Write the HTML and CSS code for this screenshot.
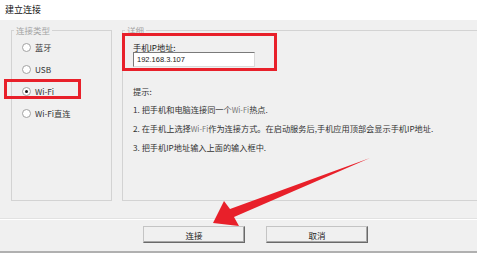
FILE: index.html
```html
<!DOCTYPE html>
<html lang="zh-CN">
<head>
  <meta charset="UTF-8" />
  <title>建立连接</title>
  <link rel="stylesheet" href="styles.css">
</head>
<body>
  <div class="window">
    <div class="titlebar">建立连接</div>

    <div class="client">
      <div class="groups">
        <fieldset class="group group-type">
          <legend>连接类型</legend>
          <div class="group-body">
            <label class="radio"><span class="radio-dot"></span>蓝牙</label>
            <label class="radio"><span class="radio-dot"></span>USB</label>
            <label class="radio"><span class="radio-dot checked"></span>Wi-Fi</label>
            <label class="radio"><span class="radio-dot"></span>Wi-Fi直连</label>
          </div>
        </fieldset>

        <fieldset class="group group-detail">
          <legend>详细</legend>
          <div class="group-body detail-body">
            <div class="field-label">手机IP地址:</div>
            <div class="ip-input">192.168.3.107</div>
            <div class="hint-title">提示:</div>
            <div class="hint">1. 把手机和电脑连接同一个<span class="latin">Wi-Fi</span>热点.</div>
            <div class="hint">2. 在手机上选择<span class="latin">Wi-Fi</span>作为连接方式。在启动服务后,手机应用顶部会显示手机IP地址.</div>
            <div class="hint">3. 把手机IP地址输入上面的输入框中.</div>
          </div>
        </fieldset>
      </div>

      <div class="actions">
        <button class="btn">连接</button>
        <button class="btn">取消</button>
      </div>
    </div>

    <!-- annotations drawn over the dialog -->
    <div class="mark mark-wifi"></div>
    <div class="mark mark-ip"></div>
    <svg class="arrow" width="480" height="256" viewBox="0 0 480 256">
      <polygon points="370,158 230,209 224,201 213,223 239,226 234,217" fill="#e8202a" />
    </svg>
  </div>
</body>
</html>
```

FILE: styles.css
```css
body {
  margin: 0;
  background-color: #fff;
  font-family: "Noto Sans CJK SC", "Noto Sans", sans-serif;
  color: #2b2b2b;
}
.window {
  position: relative;
  width: 477px;
  height: 256px;
}
.titlebar {
  height: 20px;
  line-height: 19px;
  padding-left: 5px;
  font-size: 9px;
  color: #111;
  background-color: #fff;
}
.client {
  height: 231px;
  background-color: #f0f0f0;
  border-bottom: 2px solid #b0b0b0;
  overflow: hidden;
}
.groups {
  display: flex;
  gap: 10px;
  padding: 4px 0 0 11px;
}
.group {
  margin: 0;
  padding: 0;
  border: 1px solid #d3d3d3;
  height: 177px;
  box-sizing: border-box;
  min-width: 0;
  flex: none;
}
.group legend {
  font-size: 8.5px;
  line-height: 12px;
  padding: 0 2px;
  margin-left: 2px;
  color: #a4a4a4;
}
.group-type {
  width: 101px;
}
.group-detail {
  width: 370px;
}
.group-body {
  padding-left: 9px;
}
.radio {
  display: flex;
  align-items: center;
  height: 22px;
  font-size: 8.2px;
  color: #333;
}
.radio-dot {
  width: 7px;
  height: 7px;
  margin: 0 4px 0 1px;
  border: 1px solid #a2a2a2;
  border-radius: 50%;
  background-color: #fff;
  display: flex;
  align-items: center;
  justify-content: center;
}
.radio-dot.checked::after {
  content: "";
  width: 3px;
  height: 3px;
  border-radius: 50%;
  background-color: #1a1a1a;
}
.detail-body {
  padding-left: 10px;
}
.field-label {
  margin-top: 6px;
  line-height: 10px;
  font-size: 8.2px;
  color: #222;
}
.ip-input {
  width: 122px;
  height: 15px;
  box-sizing: border-box;
  border: 1px solid;
  border-color: #7a7a7a #dadada #dadada #7a7a7a;
  background-color: #fff;
  padding-left: 3px;
  font-family: "Liberation Sans", sans-serif;
  font-size: 7.5px;
  line-height: 13px;
  color: #222;
}
.hint-title {
  margin-top: 15px;
  line-height: 18px;
  font-size: 8.2px;
  color: #333;
}
.hint {
  line-height: 18px;
  font-size: 8.2px;
  color: #333;
  white-space: nowrap;
}
.latin {
  color: #777;
  font-size: 7.5px;
}
.actions {
  display: flex;
  gap: 21px;
  margin-top: 17px;
  padding: 7px 0 0 143px;
  border-top: 1px solid #e2e2e2;
  box-shadow: inset 0 1px 0 #fff;
}
.btn {
  width: 102px;
  height: 17px;
  padding: 0;
  font-family: inherit;
  font-size: 8.5px;
  color: #222;
  background-color: #f0f0f0;
  border: 1px solid;
  border-color: #c4c4c4 #6a6a6a #6a6a6a #c4c4c4;
  box-shadow: inset -1px -1px 0 #a8a8a8;
}
.mark {
  position: absolute;
  border: 3px solid #e8202a;
  box-sizing: border-box;
}
.mark-wifi {
  left: 4px;
  top: 79px;
  width: 77px;
  height: 20px;
}
.mark-ip {
  left: 122px;
  top: 33px;
  width: 155px;
  height: 38px;
}
.arrow {
  position: absolute;
  left: 0;
  top: 0;
  pointer-events: none;
}
```
